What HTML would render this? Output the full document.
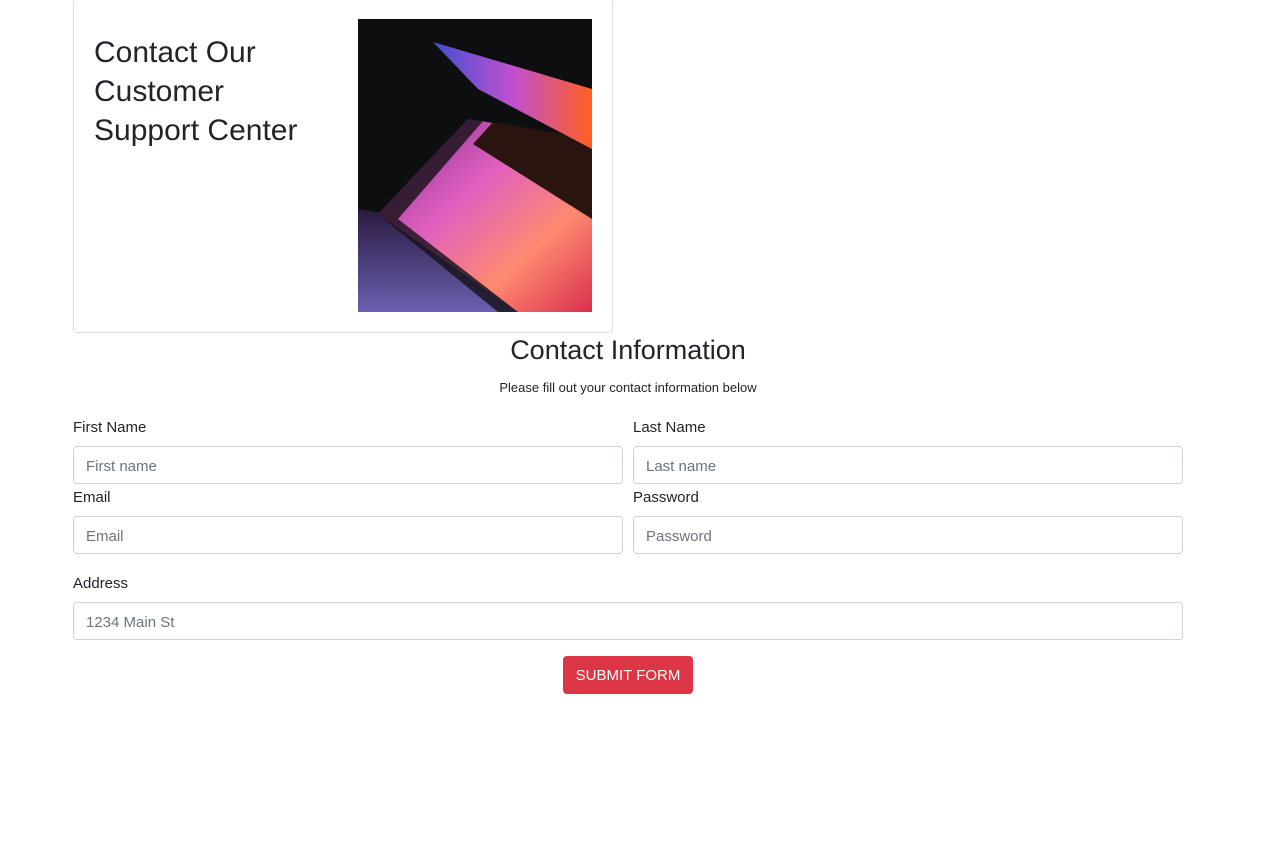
<!DOCTYPE html>
<html><head><meta charset="utf-8"><style>
*{box-sizing:border-box;margin:0;padding:0}
body{width:1275px;height:849px;background:#fff;font-family:"Liberation Sans",sans-serif;color:#212529;position:relative;overflow:hidden}
.card{position:absolute;left:73px;top:-2px;width:540px;height:335px;border:1px solid #dfdfdf;border-radius:4px}
h1{position:absolute;left:94px;top:33px;font-size:30px;font-weight:500;line-height:39px;width:225px;color:#212529}
.img{position:absolute;left:358px;top:19px;width:234px;height:293px}
h2{position:absolute;left:0;width:1256px;text-align:center;top:335px;font-size:27px;font-weight:500}
.sub{position:absolute;left:0;width:1256px;text-align:center;top:380px;font-size:13px}
label{position:absolute;font-size:15px;margin-top:1px}
.in{position:absolute;height:38px;border:1px solid #ced4da;border-radius:4px;font-size:15px;color:#6c757d;padding:11px 12px;line-height:17px}
.btn{position:absolute;left:563px;top:656px;width:130px;height:38px;background:#dc3545;color:#fff;border-radius:4px;font-size:15px;text-align:center;line-height:40px}
</style></head><body>
<div class="card"></div>
<h1>Contact Our Customer Support Center</h1>
<svg class="img" viewBox="0 0 234 293">
<defs>
<linearGradient id="a" x1="0" y1="0" x2="1" y2="1"><stop offset="0" stop-color="#7a2a8a"/><stop offset=".4" stop-color="#e060c0"/><stop offset=".7" stop-color="#ff8a70"/><stop offset="1" stop-color="#d83050"/></linearGradient>
<linearGradient id="b" x1="0" y1="0" x2="1" y2="0"><stop offset="0" stop-color="#4050d0"/><stop offset=".5" stop-color="#c050d0"/><stop offset="1" stop-color="#ff6020"/></linearGradient>
<linearGradient id="c" x1="0" y1="0" x2="0" y2="1"><stop offset="0" stop-color="#2a1a40"/><stop offset="1" stop-color="#6a60b0"/></linearGradient>
</defs>
<rect width="234" height="293" fill="#0d0e10"/>
<path d="M0 190 L0 293 L234 293 L234 260 Q120 260 60 200 Z" fill="url(#c)"/>
<path d="M20 195 L110 100 L234 120 L234 293 L160 293 Z" fill="url(#a)"/>
<path d="M20 195 L110 100 L125 102 L40 200 L160 293 L140 293 Z" fill="#151018" opacity=".8"/>
<path d="M115 125 L135 103 L234 120 L234 200 Z" fill="#2a1410"/>
<path d="M75 23 L234 70 L234 130 L120 70 Z" fill="url(#b)"/>
</svg>
<h2>Contact Information</h2>
<div class="sub">Please fill out your contact information below</div>
<label style="left:73px;top:418px">First Name</label>
<label style="left:633px;top:418px">Last Name</label>
<div class="in" style="left:73px;top:446px;width:550px">First name</div>
<div class="in" style="left:633px;top:446px;width:550px">Last name</div>
<label style="left:73px;top:488px">Email</label>
<label style="left:633px;top:488px">Password</label>
<div class="in" style="left:73px;top:516px;width:550px">Email</div>
<div class="in" style="left:633px;top:516px;width:550px">Password</div>
<label style="left:73px;top:574px">Address</label>
<div class="in" style="left:73px;top:602px;width:1110px">1234 Main St</div>
<div class="btn">SUBMIT FORM</div>
</body></html>
